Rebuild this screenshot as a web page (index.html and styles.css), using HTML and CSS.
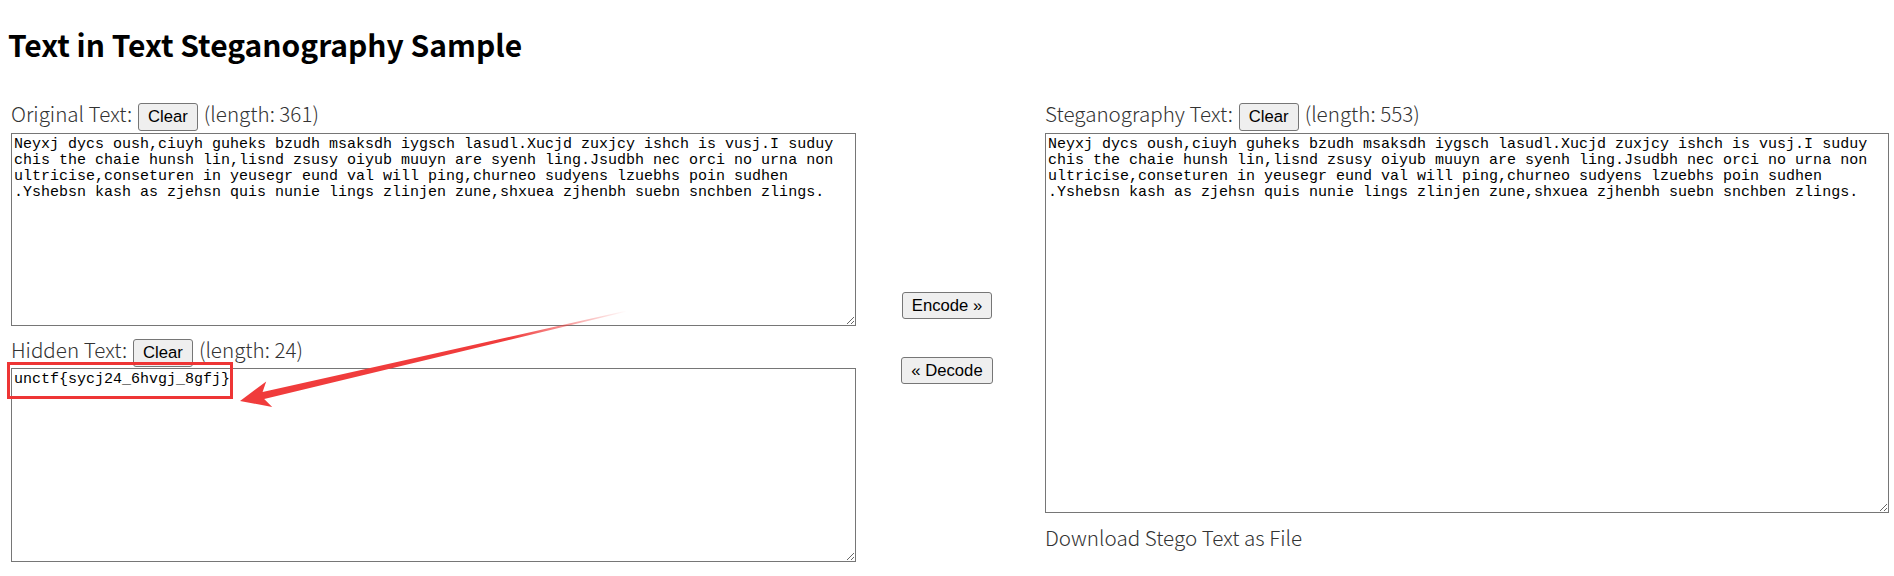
FILE: index.html
```html
<!DOCTYPE html>
<html lang="ja">
<head>
<meta charset="utf-8">
<title>Text in Text Steganography Sample</title>
<link rel="stylesheet" href="styles.css">
</head>
<body>
<div class="page">
  <h1 class="title">Text in Text Steganography Sample</h1>
  <div class="grid">
    <div class="col col-left">
      <div class="label-row">
        <span class="label">Original Text:</span>
        <button class="btn">Clear</button>
        <span class="label">(length: 361)</span>
      </div>
      <textarea class="ta ta-orig" spellcheck="false">Neyxj dycs oush,ciuyh guheks bzudh msaksdh iygsch lasudl.Xucjd zuxjcy ishch is vusj.I suduy chis the chaie hunsh lin,lisnd zsusy oiyub muuyn are syenh ling.Jsudbh nec orci no urna non ultricise,conseturen in yeusegr eund val will ping,churneo sudyens lzuebhs poin sudhen .Yshebsn kash as zjehsn quis nunie lings zlinjen zune,shxuea zjhenbh suebn snchben zlings.</textarea>
      <div class="label-row label-row-hidden">
        <span class="label">Hidden Text:</span>
        <button class="btn">Clear</button>
        <span class="label">(length: 24)</span>
      </div>
      <div class="hidden-wrap">
        <textarea class="ta ta-hidden" spellcheck="false">unctf{sycj24_6hvgj_8gfj}</textarea>
        <div class="highlight"></div>
      </div>
    </div>
    <div class="col col-mid">
      <button class="btn btn-mid">Encode »</button>
      <button class="btn btn-mid">« Decode</button>
    </div>
    <div class="col col-right">
      <div class="label-row">
        <span class="label">Steganography Text:</span>
        <button class="btn">Clear</button>
        <span class="label">(length: 553)</span>
      </div>
      <textarea class="ta ta-stego" spellcheck="false">Neyxj dycs oush,ciuyh guheks bzudh msaksdh iygsch lasudl.Xucjd zuxjcy ishch is vusj.I suduy chis the chaie hunsh lin,lisnd zsusy oiyub muuyn are syenh ling.Jsudbh nec orci no urna non ultricise,conseturen in yeusegr eund val will ping,churneo sudyens lzuebhs poin sudhen .Yshebsn kash as zjehsn quis nunie lings zlinjen zune,shxuea zjhenbh suebn snchben zlings.</textarea>
      <div class="download">Download Stego Text as File</div>
    </div>
  </div>
  <svg class="arrow" width="1894" height="576" viewBox="0 0 1894 576" aria-hidden="true">
    <defs>
      <linearGradient id="fade" gradientUnits="userSpaceOnUse" x1="240" y1="378" x2="627" y2="287">
        <stop offset="0" stop-color="#f03c3c"/>
        <stop offset="0.7" stop-color="#f03c3c"/>
        <stop offset="1" stop-color="#f03c3c" stop-opacity="0"/>
      </linearGradient>
    </defs>
    <polygon fill="url(#fade)" points="240,377 266.2,357.5 262.6,368.1 626.9,286.5 627.1,287.5 264.2,374.9 272.2,382.9"/>
  </svg>
</div>
</body>
</html>
```

FILE: styles.css
```css
html, body {
  margin: 0;
  padding: 0;
  background: #fff;
}

.page {
  position: relative;
  padding: 0 8px;
  font-family: "Noto Sans CJK JP", "Noto Sans", sans-serif;
  color: #333;
}

.title {
  margin: 24px 0 0 0;
  font-family: "Noto Sans CJK JP", "Noto Sans", sans-serif;
  font-weight: 700;
  font-size: 30px;
  line-height: 40px;
  color: #000;
}

.grid {
  display: grid;
  grid-template-columns: 845px 189px 844px;
  padding-left: 3px;
  margin-top: 39px;
}

.col {
  display: flex;
  flex-direction: column;
}

.label-row {
  display: flex;
  align-items: baseline;
  gap: 6px;
}

.label {
  font-size: 20.6px;
  line-height: 20px;
  font-weight: 300;
  color: #333;
}

.btn {
  font-family: "Liberation Sans", Arial, sans-serif;
  font-size: 16.67px;
  color: #000;
  background: #efefef;
  border: 1px solid #767676;
  border-radius: 3px;
  padding: 3px 9px;
  margin: 0;
}

.ta {
  box-sizing: border-box;
  display: block;
  margin: 1.5px 0 0 0;
  padding: 3px 2px;
  border: 1px solid #767676;
  font-family: "Liberation Mono", "DejaVu Sans Mono", monospace;
  font-size: 15px;
  line-height: 16px;
  color: #000;
  background: #fff;
  resize: both;
}

.ta-orig {
  width: 845px;
  height: 193px;
}

.label-row-hidden {
  margin-top: 13.5px;
}

.hidden-wrap {
  position: relative;
}

.ta-hidden {
  width: 845px;
  height: 194px;
  margin-top: 0.5px;
}

.highlight {
  position: absolute;
  left: -4px;
  top: -5px;
  width: 220px;
  height: 31px;
  border: 3px solid #ee3535;
}

.col-mid {
  align-items: center;
  padding-top: 189px;
  padding-right: 7px;
  gap: 38px;
}

.btn-mid {
  padding: 2.5px 9px;
}

.ta-stego {
  width: 844px;
  height: 380px;
}

.download {
  margin-top: 14.3px;
  font-size: 20.6px;
  line-height: 20px;
  font-weight: 300;
  color: #333;
}

.arrow {
  position: absolute;
  left: 0;
  top: 0;
  pointer-events: none;
}
```
